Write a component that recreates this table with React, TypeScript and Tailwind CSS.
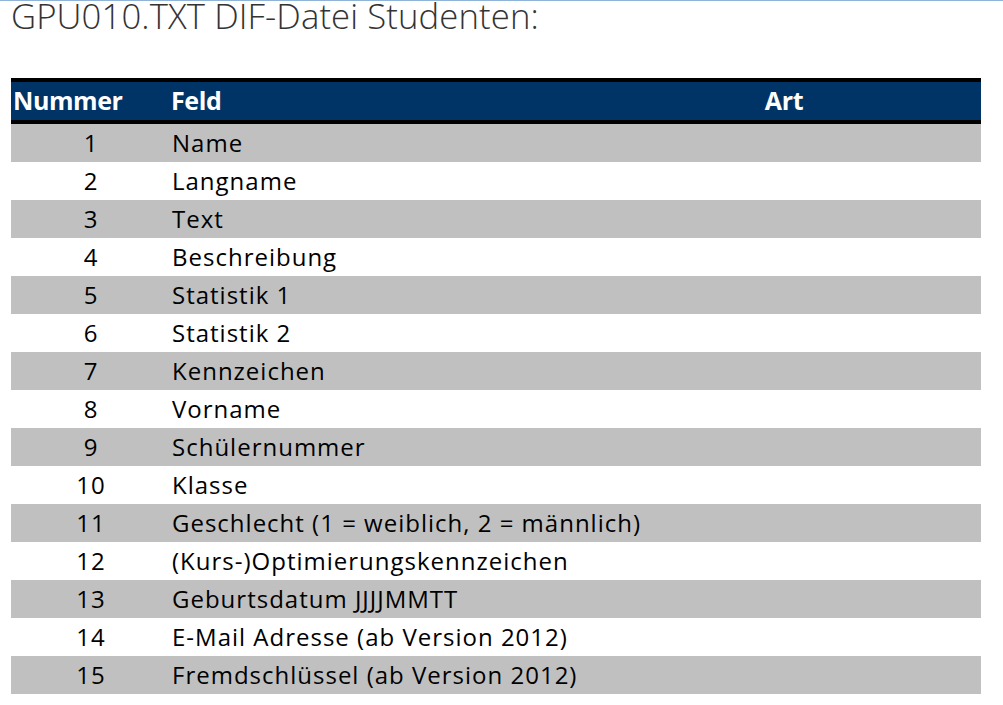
import React from "react";

const rows = [
  "Name",
  "Langname",
  "Text",
  "Beschreibung",
  "Statistik 1",
  "Statistik 2",
  "Kennzeichen",
  "Vorname",
  "Schülernummer",
  "Klasse",
  "Geschlecht (1 = weiblich, 2 = männlich)",
  "(Kurs-)Optimierungskennzeichen",
  "Geburtsdatum JJJJMMTT",
  "E-Mail Adresse (ab Version 2012)",
  "Fremdschlüssel (ab Version 2012)",
];

export default function App() {
  return (
    <div className="w-[1003px] h-[705px] bg-white overflow-hidden border-t border-[#8fb4d8]">
      <h1
        className="pl-[11px] text-[34.7px] leading-[36px] font-light text-[#333] -mt-[3px] tracking-[0.1px] whitespace-nowrap"
        style={{ fontFamily: '"Open Sans", sans-serif' }}
      >
        GPU010.TXT DIF-Datei Studenten:
      </h1>
      <div
        className="ml-[11px] mt-[44px] w-[970px] text-black"
        style={{ fontFamily: '"Open Sans", "Noto Sans", sans-serif' }}
      >
        <div className="flex h-[46px] items-center bg-[#003466] border-y-4 border-black text-white font-bold text-[25px] tracking-[-0.4px]">
          <div className="w-[159px] pl-[2px]">Nummer</div>
          <div className="w-[417px] pl-[1px]">Feld</div>
          <div className="flex-1 text-center">Art</div>
        </div>
        {rows.map((r, i) => (
          <div
            key={i}
            className={`flex h-[38px] items-center text-[24px] tracking-[1px] whitespace-nowrap ${i % 2 === 0 ? "bg-[#c0c0c0]" : "bg-white"}`}
          >
            <div className="w-[160px] text-center">{i + 1}</div>
            <div className="w-[416px] pl-[1px]">{r}</div>
            <div className="flex-1"></div>
          </div>
        ))}
      </div>
    </div>
  );
}
